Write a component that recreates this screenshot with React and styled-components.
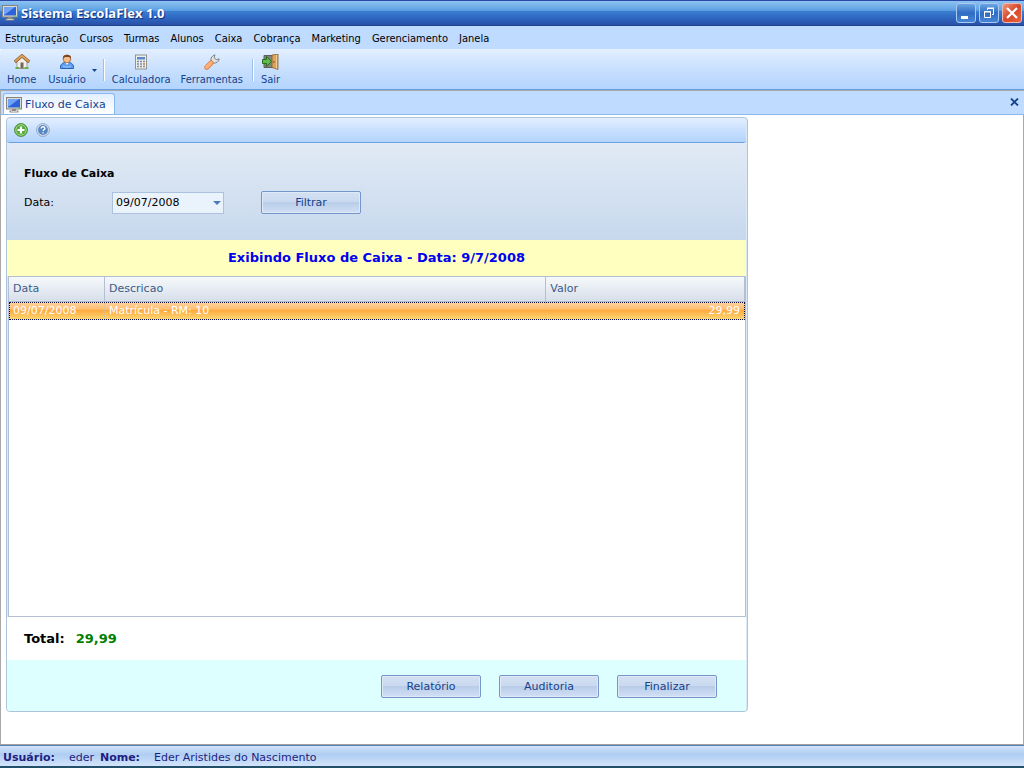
import React, { useState } from "react";
import styled, { createGlobalStyle, css } from "styled-components";

const GlobalStyle = createGlobalStyle`
  * {
    box-sizing: border-box;
  }
  body {
    margin: 0;
    background: #ffffff;
    font-family: "DejaVu Sans", Verdana, sans-serif;
    font-size: 11px;
    line-height: 14px;
  }
  button,
  input {
    font: inherit;
    margin: 0;
    padding: 0;
  }
`;

const menuFont = css`
  font-family: "DejaVu Sans Condensed", Tahoma, sans-serif;
`;

const Window = styled.div`
  display: flex;
  flex-direction: column;
  min-height: 100vh;
`;

const TitleBar = styled.header`
  display: flex;
  align-items: center;
  height: 26px;
  padding: 0 2px;
  border-top: 1px solid #2a48a8;
  border-bottom: 1px solid #1f3f8f;
  background: linear-gradient(
    #8ec2f2 0%,
    #66a8e6 32%,
    #5a9ce0 40%,
    #3a7fd2 42%,
    #2c64bd 75%,
    #2a4fa8 100%
  );
`;

const Title = styled.h1`
  flex: 1;
  margin: 0 0 0 3px;
  color: #ffffff;
  font-family: "Open Sans", "Trebuchet MS", sans-serif;
  font-size: 13px;
  font-weight: 700;
  line-height: 16px;
  text-shadow: 1px 1px 0 #14307c;
`;

const WindowButtons = styled.div`
  display: flex;
  gap: 3px;
`;

const WindowButton = styled.button`
  width: 20px;
  height: 20px;
  border: 1px solid ${(p) => (p.$close ? "#f0b8b0" : "#a9c9f0")};
  border-radius: 3px;
  background: ${(p) =>
    p.$close
      ? "linear-gradient(135deg, #f09a80, #d8472a 50%, #e8623c)"
      : "linear-gradient(#6ba5e2, #2f6cc4 50%, #4585d6)"};

  svg {
    display: block;
  }
`;

const MenuBar = styled.nav`
  display: flex;
  gap: 11px;
  height: 23px;
  padding: 6px 5px 0;
  background: #bfdbff;
  ${menuFont}
`;

const MenuItem = styled.a`
  color: #000000;
  text-decoration: none;
`;

const ToolBar = styled.div`
  display: flex;
  align-items: center;
  height: 41px;
  padding: 2px 7px 0;
  border-bottom: 1px solid #6a9fe0;
  border-top-left-radius: 3px;
  background: linear-gradient(#e3efff, #c9e0fe 50%, #b3d4fd);
  ${menuFont}
`;

const ToolButton = styled.button`
  display: flex;
  flex-direction: column;
  align-items: center;
  gap: 3px;
  margin-right: ${(p) => p.$gap || 0}px;
  border: 0;
  background: none;
  color: #15428b;
  line-height: 14px;
`;

const DropButton = styled.button`
  display: flex;
  align-items: center;
  justify-content: center;
  width: 12px;
  height: 20px;
  border: 0;
  background: none;
`;

const Separator = styled.span`
  width: 2px;
  height: 22px;
  margin: 0 7px 0 2px;
  border-left: 1px solid #9ac0f0;
  background: #ffffff;
`;

const TabStrip = styled.div`
  display: flex;
  align-items: flex-end;
  justify-content: space-between;
  height: 25px;
  padding: 0 5px 0 2px;
  border-top: 1px solid #a8a8a8;
  border-left: 1px solid #a8a8a8;
  border-bottom: 1px solid #8ab8ee;
  background: #bfdbff;
`;

const Tab = styled.button`
  display: flex;
  align-items: center;
  gap: 3px;
  height: 21px;
  padding: 2px 8px 0 2px;
  border: 1px solid #8ab8ee;
  border-bottom: 0;
  border-radius: 3px 3px 0 0;
  background: linear-gradient(#e3efff, #ffffff);
  color: #15428b;
  white-space: nowrap;
`;

const CloseTab = styled.button`
  display: flex;
  align-items: center;
  height: 24px;
  border: 0;
  background: none;
`;

const Workspace = styled.main`
  display: flex;
  flex: 1;
  padding: 2px 5px 32px;
  border-left: 1px solid #a8a8a8;
  border-right: 1px solid #a8a8a8;
`;

const Panel = styled.section`
  display: flex;
  flex-direction: column;
  width: 100%;
  max-width: 742px;
  padding-right: 1px;
  border: 1px solid #aec3dc;
  border-radius: 4px;
  background: #dbe8f6;
  overflow: hidden;
`;

const PanelTools = styled.div`
  display: flex;
  align-items: center;
  gap: 8px;
  height: 25px;
  padding: 0 7px;
  border-bottom: 1px solid #6a9fe0;
  border-radius: 3px;
  background: linear-gradient(#e3efff, #c9e0fe 50%, #b3d4fd);
`;

const IconButton = styled.button`
  display: flex;
  border: 0;
  background: none;
`;

const FilterArea = styled.form`
  height: 97px;
  padding: 24px 17px 0;
  background: linear-gradient(#e1eaf5, #c7d8ed);
`;

const SectionTitle = styled.h2`
  margin: 0 0 10px;
  font-size: 11px;
  line-height: 14px;
`;

const FilterRow = styled.div`
  display: flex;
  align-items: center;
`;

const Label = styled.label`
  width: 88px;
`;

const DateBox = styled.div`
  display: flex;
  width: 112px;
  height: 22px;
  margin-right: 37px;
  border: 1px solid #abc1de;
  background: #eaf2fb;
`;

const DateInput = styled.input`
  flex: 1;
  min-width: 0;
  padding-left: 3px;
  border: 0;
  outline: 0;
  background: none;
  color: #000000;
`;

const Button = styled.button`
  width: 100px;
  height: 23px;
  border: 1px solid #7596c8;
  border-radius: 2px;
  background: linear-gradient(#d3e0f3 0%, #cbdaf0 45%, #b9cde9 50%, #d2dff6 100%);
  box-shadow: inset 0 0 0 1px #dfe9f8;
  color: #15428b;
`;

const Banner = styled.h2`
  margin: 0;
  padding: 10px 0;
  background: #ffffc0;
  color: #0000ee;
  font-size: 13px;
  line-height: 16px;
  text-align: center;
`;

const Grid = styled.div`
  flex: 1;
  margin-left: 1px;
  border: 1px solid #b5bfd3;
  background: #ffffff;
`;

const Table = styled.table`
  width: 100%;
  border-collapse: separate;
  border-spacing: 0;
  table-layout: fixed;
`;

const HeadCell = styled.th`
  width: ${(p) => p.$width || "auto"};
  height: 25px;
  padding: 0 4px;
  border-right: 1px solid #b5bfd3;
  border-bottom: 1px solid #b5bfd3;
  background: linear-gradient(#f6f9fb, #d7dfea);
  color: #3d5a88;
  font-weight: 400;
  text-align: left;
`;

const Row = styled.tr`
  outline: 1px dotted #101040;
  outline-offset: -1px;
  background: linear-gradient(#ffd6a0 0%, #ffbe72 40%, #ffa83c 45%, #ffdc78 100%);
`;

const Cell = styled.td`
  height: 18px;
  padding: 0 4px;
  border-right: 1px dotted ${(p) => (p.$last ? "transparent" : "#c8c0b0")};
  color: #ffffff;
  line-height: 14px;
  text-align: ${(p) => (p.$right ? "right" : "left")};
`;

const Total = styled.div`
  display: flex;
  gap: 11px;
  padding: 14px 17px 13px;
  background: #ffffff;
  font-size: 13px;
  font-weight: 700;
  line-height: 16px;
`;

const TotalValue = styled.span`
  color: #008000;
`;

const Footer = styled.footer`
  display: flex;
  justify-content: flex-end;
  gap: 18px;
  padding: 15px 29px 13px;
  background: #deffff;
`;

const StatusBar = styled.footer`
  display: flex;
  align-items: center;
  height: 24px;
  padding: 4px 3px 0;
  border-top: 1px solid #a0a0a0;
  border-bottom: 2px solid #22506a;
  box-shadow: inset 0 1px 0 #5c80b8;
  background: linear-gradient(#d5e5fa, #afcdf3 45%, #d3e4fb);
  color: #1e1e82;
`;

const StatusValue = styled.span`
  margin: 0 6px 0 14px;
`;

const Monitor = () => (
  <svg width="16" height="16" viewBox="0 0 16 16">
    <rect x="0.5" y="0.5" width="15" height="11.5" fill="#dcdcd4" stroke="#85857e" />
    <rect x="2" y="2" width="12" height="8.5" fill="#2e62d8" />
    <path d="M2 2h11L3 9.5H2z" fill="#6fa4f8" />
    <path d="M12.5 11h2" stroke="#30d030" />
    <path d="M6 12h4v1.5h2.500V15.500h-9V13.500H6z" fill="#8b8b88" />
    <path d="M5 14.500h6" stroke="#d0d0cc" />
  </svg>
);

const HouseIcon = () => (
  <svg width="16" height="16" viewBox="0 0 16 16">
    <path d="M3 7.500L8 3l5 4.500V14.500H3z" fill="#f3f0e9" stroke="#968d80" strokeWidth="0.800" />
    <path d="M0.800 8L8 1.800 15.200 8" fill="none" stroke="#8d5c28" strokeWidth="3.200" />
    <path d="M1.200 7.500L8 1.800l6.800 5.700" fill="none" stroke="#dca05a" strokeWidth="1.900" />
    <rect x="6.500" y="8.500" width="3" height="6" fill="#75685e" />
    <path d="M1.500 14h4M10.500 14h4" stroke="#6cae48" strokeWidth="2" />
  </svg>
);

const UserIcon = () => (
  <svg width="16" height="16" viewBox="0 0 16 16">
    <path d="M1.500 14.500c-.5-4 2-5.500 4-6h5c2 .5 4.500 2 4 6z" fill="#5d9ef0" stroke="#2a62b8" />
    <path d="M4 12c2 1.500 6 1.500 8 0" fill="none" stroke="#a0ccff" />
    <path d="M6 8h4l-2 3z" fill="#fff" />
    <circle cx="8" cy="5" r="3.800" fill="#f5bd8a" stroke="#a06030" strokeWidth="0.800" />
    <path d="M4 5C3.500 1.500 6 .8 8 .8s4.500.7 4 4.200c-1-2-2-2-4-2s-3 0-4 2z" fill="#7c4520" />
  </svg>
);

const CalculatorIcon = () => (
  <svg width="16" height="16" viewBox="0 0 16 16">
    <rect x="2.500" y="1" width="11" height="14" fill="#eeeeea" stroke="#92928e" />
    <rect x="4" y="3" width="8" height="2.500" fill="#5c87c8" />
    <path
      d="M4 7.500h8M4 10h8M4 12.500h8"
      stroke="#7e8da4"
      strokeWidth="1.500"
      strokeDasharray="2 1"
    />
    <path d="M10 10h2" stroke="#e09060" strokeWidth="1.500" />
  </svg>
);

const WrenchIcon = () => (
  <svg width="16" height="16" viewBox="0 0 16 16">
    <path
      d="M7 7c-.5-3 1-5.500 4-6.200l-.8 2.900 2 1.900 3-.7c-.4 3-3 4.600-5.700 4.100L8.500 10 6 7.500z"
      fill="#dedfe0"
      stroke="#77797c"
      strokeWidth="0.900"
    />
    <path d="M2.800 13.200L7 9" stroke="#d87840" strokeWidth="5" strokeLinecap="round" />
    <path d="M2.800 13L6.900 8.900" stroke="#ffae7a" strokeWidth="3.600" strokeLinecap="round" />
  </svg>
);

const ExitIcon = () => (
  <svg width="17" height="16" viewBox="0 0 17 16">
    <path d="M2 1.500h9v12H2z" fill="#82817a" stroke="#5e5e55" />
    <path d="M10 1l6-1v15.500l-6-2z" fill="#d9a45e" stroke="#8a6330" strokeWidth="0.800" />
    <path d="M14.500 1v13.500" stroke="#f1ca8c" />
    <circle cx="11.800" cy="8" r="0.800" fill="#704a18" />
    <path d="M.5 5.500h4v-3L9.500 7.500l-5 5v-3h-4z" fill="#63b950" stroke="#24701c" />
  </svg>
);

const AddIcon = () => (
  <svg width="14" height="14" viewBox="0 0 14 14">
    <circle cx="7" cy="7" r="6.400" fill="#55a93b" stroke="#4c8e38" />
    <circle cx="7" cy="7" r="5.200" fill="none" stroke="#a5d98d" />
    <path d="M7 3.500v7M3.500 7h7" stroke="#fff" strokeWidth="2.200" />
  </svg>
);

const HelpIcon = () => (
  <svg width="14" height="14" viewBox="0 0 14 14">
    <circle cx="7" cy="7" r="6.400" fill="#d8e0ec" stroke="#90a6c8" />
    <circle cx="7" cy="7" r="4.900" fill="#5886c2" />
    <path
      d="M5.200 5.600c0-2.600 3.700-2.300 3.700-.2 0 1.300-1.800 1.400-1.800 2.700M7.100 9.300v1.300"
      fill="none"
      stroke="#fff"
      strokeWidth="1.400"
    />
  </svg>
);

const ArrowDown = ({ width = 5, height = 3, color = "#15428b" }) => (
  <svg width={width} height={height} viewBox="0 0 8 4" preserveAspectRatio="none">
    <path d="M0 0h8L4 4z" fill={color} />
  </svg>
);

const menuItems = [
  "Estruturação",
  "Cursos",
  "Turmas",
  "Alunos",
  "Caixa",
  "Cobrança",
  "Marketing",
  "Gerenciamento",
  "Janela",
];

const rows = [{ data: "09/07/2008", descricao: "Matrícula - RM: 10", valor: "29,99" }];

const App = () => {
  const [date, setDate] = useState("09/07/2008");

  return (
    <>
      <GlobalStyle />
      <Window>
        <TitleBar>
          <Monitor />
          <Title>Sistema EscolaFlex 1.0</Title>
          <WindowButtons>
            <WindowButton type="button" aria-label="Minimizar">
              <svg width="18" height="18" viewBox="0 0 18 18">
                <path d="M4 13.500h7" stroke="#fff" strokeWidth="3" />
              </svg>
            </WindowButton>
            <WindowButton type="button" aria-label="Restaurar">
              <svg width="18" height="18" viewBox="0 0 18 18" fill="none" stroke="#fff">
                <path d="M4.500 7.500h6v6h-6zM4 8h7" />
                <path d="M7.500 6V4.500h6v6H12M7 4h7" />
              </svg>
            </WindowButton>
            <WindowButton type="button" aria-label="Fechar" $close>
              <svg width="18" height="18" viewBox="0 0 18 18">
                <path d="M4 4l10 10M14 4L4 14" stroke="#fff" strokeWidth="2.300" />
              </svg>
            </WindowButton>
          </WindowButtons>
        </TitleBar>

        <MenuBar>
          {menuItems.map((item) => (
            <MenuItem key={item} href="#">
              {item}
            </MenuItem>
          ))}
        </MenuBar>

        <ToolBar>
          <ToolButton type="button" $gap={12}>
            <HouseIcon />
            Home
          </ToolButton>
          <ToolButton type="button" $gap={3}>
            <UserIcon />
            Usuário
          </ToolButton>
          <DropButton type="button" aria-label="Opções de usuário">
            <ArrowDown />
          </DropButton>
          <Separator />
          <ToolButton type="button" $gap={10}>
            <CalculatorIcon />
            Calculadora
          </ToolButton>
          <ToolButton type="button" $gap={7}>
            <WrenchIcon />
            Ferramentas
          </ToolButton>
          <Separator />
          <ToolButton type="button">
            <ExitIcon />
            Sair
          </ToolButton>
        </ToolBar>

        <TabStrip>
          <Tab type="button">
            <Monitor />
            Fluxo de Caixa
          </Tab>
          <CloseTab type="button" aria-label="Fechar aba">
            <svg width="9" height="8" viewBox="0 0 9 8">
              <path d="M1 .5l7 7M8 .5l-7 7" stroke="#15428b" strokeWidth="1.800" />
            </svg>
          </CloseTab>
        </TabStrip>

        <Workspace>
          <Panel>
            <PanelTools>
              <IconButton type="button" aria-label="Adicionar">
                <AddIcon />
              </IconButton>
              <IconButton type="button" aria-label="Ajuda">
                <HelpIcon />
              </IconButton>
            </PanelTools>

            <FilterArea onSubmit={(e) => e.preventDefault()}>
              <SectionTitle>Fluxo de Caixa</SectionTitle>
              <FilterRow>
                <Label htmlFor="data">Data:</Label>
                <DateBox>
                  <DateInput
                    id="data"
                    type="text"
                    value={date}
                    onChange={(e) => setDate(e.target.value)}
                  />
                  <DropButton type="button" aria-label="Abrir calendário">
                    <ArrowDown width={8} height={4} color="#4a7ab8" />
                  </DropButton>
                </DateBox>
                <Button type="submit">Filtrar</Button>
              </FilterRow>
            </FilterArea>

            <Banner>Exibindo Fluxo de Caixa - Data: 9/7/2008</Banner>

            <Grid>
              <Table>
                <thead>
                  <tr>
                    <HeadCell $width="96px">Data</HeadCell>
                    <HeadCell>Descricao</HeadCell>
                    <HeadCell $width="27%">Valor</HeadCell>
                  </tr>
                </thead>
                <tbody>
                  {rows.map((row) => (
                    <Row key={row.descricao}>
                      <Cell>{row.data}</Cell>
                      <Cell>{row.descricao}</Cell>
                      <Cell $right $last>
                        {row.valor}
                      </Cell>
                    </Row>
                  ))}
                </tbody>
              </Table>
            </Grid>

            <Total>
              <span>Total:</span>
              <TotalValue>29,99</TotalValue>
            </Total>

            <Footer>
              <Button type="button">Relatório</Button>
              <Button type="button">Auditoria</Button>
              <Button type="button">Finalizar</Button>
            </Footer>
          </Panel>
        </Workspace>

        <StatusBar>
          <strong>Usuário:</strong>
          <StatusValue>eder</StatusValue>
          <strong>Nome:</strong>
          <StatusValue>Eder Aristides do Nascimento</StatusValue>
        </StatusBar>
      </Window>
    </>
  );
};

export default App;
